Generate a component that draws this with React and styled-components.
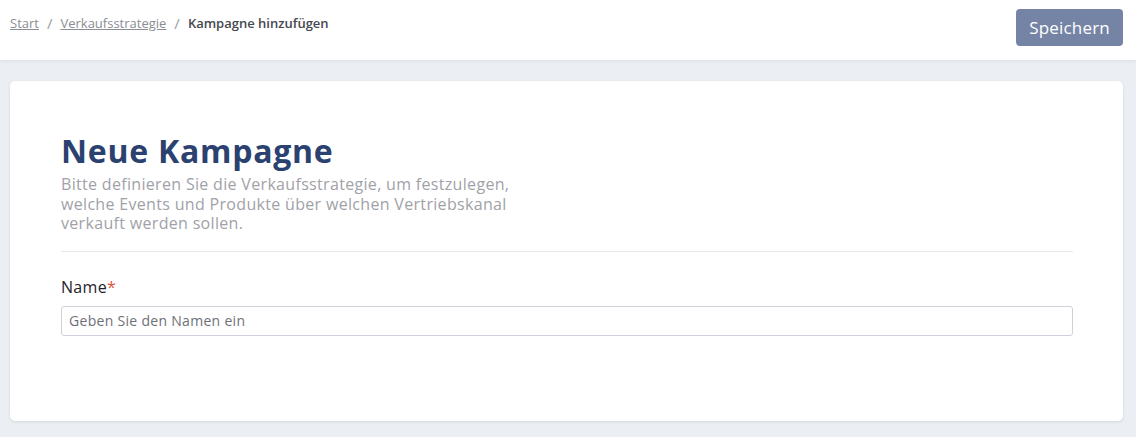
import styled, { createGlobalStyle } from 'styled-components';

const GlobalStyle = createGlobalStyle`
  body {
    margin: 0;
    background: #ebeef2;
    font-family: 'Open Sans', 'Liberation Sans', sans-serif;
  }
`;

const Page = styled.div`
  min-height: 437px;
  display: flex;
  flex-direction: column;
`;

const TopBar = styled.header`
  height: 60px;
  background: #fff;
  box-shadow: 0 1px 4px rgba(40, 50, 70, 0.08);
  display: flex;
  justify-content: space-between;
  align-items: flex-start;
  padding: 0 13px 0 10px;
`;

const Crumbs = styled.nav`
  display: flex;
  align-items: center;
  gap: 8px;
  margin-top: 13px;
  font-size: 13px;
`;

const CrumbLink = styled.a`
  color: #8a8d94;
  text-decoration: underline;
  cursor: pointer;
`;

const Separator = styled.span`
  color: #9a9ca2;
  font-size: 15px;
`;

const CrumbCurrent = styled.span`
  color: #454850;
  font-weight: 600;
`;

const SaveButton = styled.button`
  margin-top: 9px;
  height: 37px;
  padding: 0 13px;
  border: none;
  border-radius: 4px;
  background: #7584a5;
  color: #fff;
  font-family: inherit;
  font-size: 17px;
  font-weight: 500;
  letter-spacing: 0.2px;
`;

const Content = styled.main`
  padding: 21px 13px 16px 10px;
`;

const Card = styled.section`
  background: #fff;
  border-radius: 5px;
  box-shadow: 0 1px 3px rgba(40, 50, 70, 0.12);
  padding: 46px 50px 85px 51px;
`;

const Title = styled.h1`
  margin: 0;
  color: #2b4170;
  font-size: 32px;
  font-weight: 700;
  line-height: 48px;
  letter-spacing: 0.75px;
`;

const Lead = styled.p`
  margin: 0;
  max-width: 470px;
  color: #a0a2a8;
  font-size: 16px;
  font-weight: 400;
  line-height: 19.5px;
  letter-spacing: 0.32px;
`;

const Divider = styled.hr`
  margin: 17px 0 23px;
  border: none;
  border-top: 1px solid #e6e8ec;
`;

const Label = styled.label`
  display: block;
  color: #1f232b;
  font-size: 16px;
  font-weight: 500;
  line-height: 24px;
  letter-spacing: 0.3px;
  margin-bottom: 7px;
`;

const Required = styled.span`
  color: #e0533a;
`;

const Input = styled.input`
  box-sizing: border-box;
  width: 100%;
  height: 30px;
  padding: 0 7px;
  border: 1px solid #cfd2da;
  border-radius: 3px;
  font-family: inherit;
  font-size: 14px;
  letter-spacing: 0.3px;
  color: #333;
  &::placeholder {
    color: #6e7078;
  }
`;

export default function App() {
  return (
    <>
      <GlobalStyle />
      <Page>
        <TopBar>
          <Crumbs>
            <CrumbLink>Start</CrumbLink>
            <Separator>/</Separator>
            <CrumbLink>Verkaufsstrategie</CrumbLink>
            <Separator>/</Separator>
            <CrumbCurrent>Kampagne hinzufügen</CrumbCurrent>
          </Crumbs>
          <SaveButton>Speichern</SaveButton>
        </TopBar>
        <Content>
          <Card>
            <Title>Neue Kampagne</Title>
            <Lead>
              Bitte definieren Sie die Verkaufsstrategie, um festzulegen, welche Events und Produkte über
              welchen Vertriebskanal verkauft werden sollen.
            </Lead>
            <Divider />
            <Label htmlFor="name">
              Name<Required>*</Required>
            </Label>
            <Input id="name" placeholder="Geben Sie den Namen ein" />
          </Card>
        </Content>
      </Page>
    </>
  );
}
